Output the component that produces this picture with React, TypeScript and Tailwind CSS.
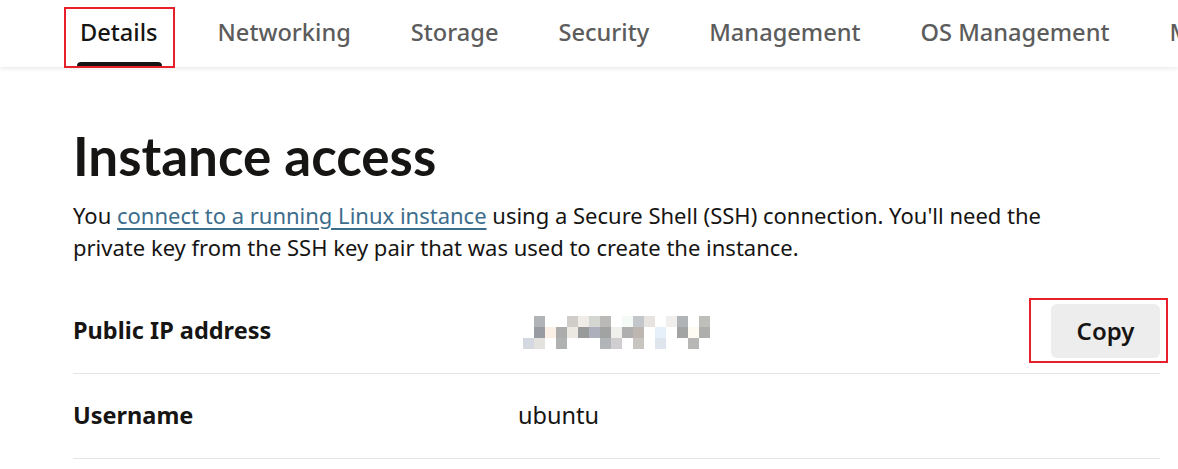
import React from 'react'

const tabs = ['Details', 'Networking', 'Storage', 'Security', 'Management', 'OS Management', 'Monitoring']

// blurred IP address: 3 rows x 17 cells, '' = white
const ipCells: string[][] = [
  ['', '#b1b4b7', '', '', '#cfccc9', '#efebe7', '#d4d6d1', '#bbb9b7', '', '#f4faf6', '#c3c7cb', '#e6e3e0', '', '#f0efed', '#b1b4b7', '', '#bebfba'],
  ['', '#989ba1', '#faf0e6', '#abacab', '#ece8e2', '#999b9b', '#adb0bc', '#a1a2a2', '#efefec', '#aeafae', '#bdb5af', '', '#e6f0fa', '', '#a2a4a4', '#fdfbf2', '#aeafac'],
  ['#d4d8e0', '#e3e2df', '', '#b0b2b1', '', '', '', '#b1b5b8', '#d1ced1', '', '#c8c5c1', '', '#dfe5ed', '', '', '#b7b8b6', ''],
]

function BlurredIp() {
  return (
    <div className="flex flex-col">
      {ipCells.map((row, r) => (
        <div key={r} className="flex">
          {row.map((c, i) => (
            <div key={i} className="w-[11px] h-[11px]" style={{ backgroundColor: c || '#ffffff' }} />
          ))}
        </div>
      ))}
    </div>
  )
}

export default function App() {
  return (
    <div className="w-[1178px] h-[469px] overflow-hidden bg-white text-[#161513]" style={{ fontFamily: '"Noto Sans", Lato, sans-serif' }}>
      {/* Tabs */}
      <div className="h-[67px] bg-white shadow-[0_2px_4px_rgba(0,0,0,0.08)] relative z-10">
        <nav className="flex h-full pl-[50px] whitespace-nowrap">
          {tabs.map((t, i) => (
            <div
              key={t}
              className={`relative h-full flex items-center px-[30px] text-[23.6px] font-medium ${i === 0 ? 'text-[#161513]' : 'text-[#5c5c5c]'}`}
            >
              <span className="-mt-[1px]">{t}</span>
              {i === 0 && (
                <>
                  <div className="absolute bottom-0 left-[27px] right-[26px] h-[5px] bg-[#161513] rounded-t-[4px]" />
                  <div className="absolute left-[14px] right-[13px] top-[7px] -bottom-[1px] border-2 border-[#e8202a]" />
                </>
              )}
            </div>
          ))}
        </nav>
      </div>

      {/* Content */}
      <div className="pl-[73px] pr-[18px]">
        <h1 className="mt-[57px] text-[53px] leading-[64px] font-bold" style={{ fontFamily: 'Lato, sans-serif' }}>
          Instance access
        </h1>
        <p className="mt-[11px] text-[22px] leading-[32px] w-[1040px]">
          You{' '}
          <a href="#" className="text-[#3d6d8c] underline underline-offset-[4px] decoration-[1.5px]">
            connect to a running Linux instance
          </a>{' '}
          using a Secure Shell (SSH) connection. You'll need the private key from the SSH key pair that was used to create the instance.
        </p>

        <div className="mt-[26px]">
          <div className="flex items-center h-[85px] border-b border-[#e4e4e4]">
            <div className="w-[450px] text-[23.5px] font-bold">Public IP address</div>
            <div className="flex-1 pt-[2px]">
              <BlurredIp />
            </div>
            <div className="relative">
              <button className="w-[109px] h-[54px] rounded-[6px] bg-[#ededed] text-[24px] font-semibold text-[#161513]">
                Copy
              </button>
              <div className="absolute -left-[22px] -right-[8px] -top-[6px] -bottom-[5px] border-2 border-[#e8202a]" />
            </div>
          </div>
          <div className="flex items-center h-[85px] border-b border-[#e4e4e4]">
            <div className="w-[445px] text-[23.5px] font-bold">Username</div>
            <div className="flex-1 text-[23.5px]">ubuntu</div>
          </div>
        </div>
      </div>
    </div>
  )
}
